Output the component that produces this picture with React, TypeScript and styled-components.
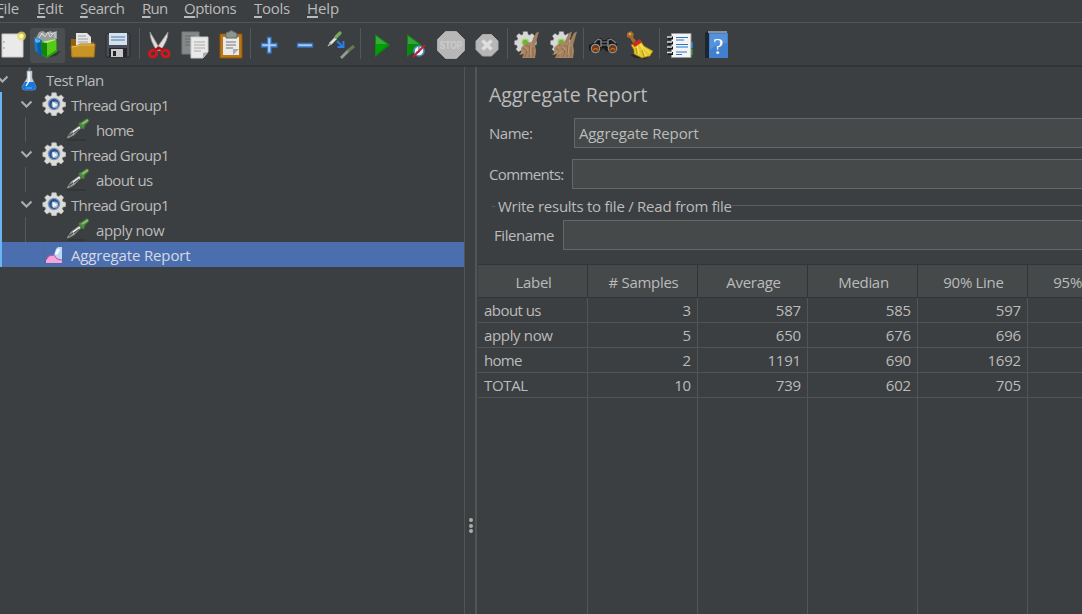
import React from "react";
import styled, { createGlobalStyle } from "styled-components";

const Global = createGlobalStyle`
  * { box-sizing: border-box; }
  html, body, #root { height: 100%; }
  body {
    margin: 0;
    overflow: hidden;
    background: #3c3f41;
    color: #bbbbbb;
    font: 15px/20px "Open Sans", "Noto Sans", sans-serif;
    white-space: nowrap;
  }
`;

const Window = styled.div`
  display: flex;
  flex-direction: column;
  width: 1082px;
  height: 614px;
  overflow: hidden;
`;

const MenuBar = styled.nav`
  display: flex;
  height: 23px;
  flex: none;
  border-bottom: 1px solid #515355;
  margin-left: -4px;
`;

const MenuItem = styled.span<{ $w: number; $track: number }>`
  display: block;
  width: ${(p) => p.$w}px;
  line-height: 16px;
  letter-spacing: ${(p) => p.$track}px;
  &::first-letter {
    text-decoration: underline;
    text-decoration-thickness: 1.5px;
    text-underline-offset: 1.5px;
  }
`;

const ToolBar = styled.div`
  display: flex;
  align-items: center;
  flex: none;
  height: 44px;
  padding-bottom: 2px;
  border-bottom: 2px solid #323537;
`;

const ToolGroup = styled.div<{ $w: number; $slot?: number; $end?: boolean }>`
  display: grid;
  grid-auto-flow: column;
  grid-auto-columns: ${(p) => p.$slot ?? 36}px;
  justify-content: ${(p) => (p.$end ? "end" : "center")};
  align-items: center;
  flex: none;
  width: ${(p) => p.$w}px;
  height: 31px;
  padding-right: ${(p) => (p.$end ? 4 : 1)}px;
  border-right: 1px solid #55585a;
  &:last-child { border-right-color: transparent; }
`;

const ToolButton = styled.span<{ $active?: boolean }>`
  display: flex;
  align-items: center;
  justify-content: center;
  height: 35px;
  border-radius: 3px;
  background: ${(p) => (p.$active ? "#4a4e50" : "transparent")};
`;

const Body = styled.div`
  display: flex;
  flex: 1;
  min-height: 0;
`;

const Tree = styled.div`
  width: 465px;
  flex: none;
  border-right: 1px solid #515355;
`;

const TreeRow = styled.div<{ $indent: number; $selected?: boolean; $bar?: boolean }>`
  display: flex;
  align-items: center;
  height: 25px;
  padding-left: ${(p) => p.$indent}px;
  box-shadow: ${(p) => (p.$bar ? "inset 2px 0 #6cb5f5" : "none")};
  background: ${(p) => (p.$selected ? "#4b6eaf" : "transparent")};
`;

const Chevron = styled.span<{ $w?: number; $shift?: number }>`
  display: flex;
  width: ${(p) => p.$w ?? 22}px;
  margin-left: ${(p) => p.$shift ?? 0}px;
  padding-bottom: 1px;
  flex: none;
`;

const Guide = styled.span`
  width: 41px;
  height: 25px;
  flex: none;
  border-left: 1.5px solid #56595b;
`;

const NodeIcon = styled.span<{ $w: number }>`
  display: flex;
  width: ${(p) => p.$w}px;
  padding-bottom: 1px;
  flex: none;
`;

const Text = styled.span<{ $track?: number; $light?: boolean }>`
  letter-spacing: ${(p) => p.$track ?? 0}px;
  color: ${(p) => (p.$light ? "#d5d9e2" : "inherit")};
`;

const Splitter = styled.div`
  display: flex;
  flex-direction: column;
  align-items: center;
  gap: 1.6px;
  width: 12px;
  flex: none;
  padding-top: 451px;
  padding-left: 1px;
  border-right: 2px solid #555452;
`;

const Dot = styled.i`
  width: 4px;
  height: 4px;
  border-radius: 50%;
  background: #adadad;
`;

const Report = styled.main`
  display: flex;
  flex-direction: column;
  flex: 1;
  min-width: 0;
  overflow: hidden;
`;

const Title = styled.h1`
  margin: 14px 0 9px 12px;
  font-size: 19.5px;
  line-height: 28px;
  font-weight: 400;
`;

const FormRow = styled.div<{ $label: number; $left?: number; $gap: number }>`
  display: grid;
  grid-template-columns: ${(p) => p.$label}px 1fr;
  align-items: center;
  height: 30px;
  flex: none;
  margin-left: ${(p) => p.$left ?? 12}px;
  margin-bottom: ${(p) => p.$gap}px;
`;

const Field = styled.div`
  height: 30px;
  padding: 4px 4px;
  border: 1px solid #646667;
  border-right: 0;
  background: #45494a;
`;

const GroupTitle = styled.div`
  display: flex;
  align-items: center;
  gap: 3px;
  height: 20px;
  margin-left: 15px;
  margin-top: -4px;
  margin-bottom: 4px;
  &::before { content: ""; width: 3px; height: 1px; background: #5a5d5f; }
  &::after { content: ""; flex: 1; height: 1px; background: #5a5d5f; margin-left: -3px; margin-top: -2px; }
`;

const Table = styled.div`
  display: grid;
  grid-template-columns: repeat(6, 110px);
  grid-template-rows: 34px repeat(4, 25px) 1fr;
  flex: 1;
  margin-left: 1px;
`;

const HeadCell = styled.div`
  display: flex;
  align-items: center;
  justify-content: center;
  padding: 2px 0 0 2px;
  border: solid #323537;
  border-width: 1px 1px 1px 0;
  background: #45494a;
`;

const Cell = styled.div<{ $num?: boolean }>`
  padding: 2px 6px 0;
  text-align: ${(p) => (p.$num ? "right" : "left")};
  border: solid #525456;
  border-width: 0 1px 1px 0;
`;

const Filler = styled.div`
  border-right: 1px solid #525456;
`;

const Svg = ({ s = 30, children }: { s?: number; children: React.ReactNode }) => (
  <svg width={s} height={s} viewBox="0 0 30 30" fill="none">{children}</svg>
);

const gearPath =
  "M12.5 2h5l.8 3.4 2 .9 3-1.9 3 3-1.9 3 .9 2 3.2.8v4.6l-3.2.8-.9 2 1.9 3-3 3-3-1.9-2 .9-.8 3.2h-5l-.8-3.2-2-.9-3 1.9-3-3 1.9-3-.9-2L2 17.8v-4.6l3.2-.8.9-2-1.9-3 3-3 3 1.9 2-.9z";

const NewIcon = () => (
  <Svg>
    <path d="M4 4h21v23H4z" fill="#eaeaea" stroke="#c8c8c8" />
    <path d="M5 12h2M5 18h2" stroke="#999" />
    <circle cx="23.5" cy="6" r="4.5" fill="#eadb55" opacity=".75" />
    <circle cx="23.5" cy="6" r="2" fill="#fff9bb" />
  </Svg>
);
const TemplatesIcon = () => (
  <Svg>
    <path d="m3 8 3-6 4-1 3 2 4-2 3 1 4-1v8l-16 4z" fill="#989e9f" />
    <path d="m6 8 3-5 3 4 3-5 2 5 5-5v6M8 4l3 1m6-2 3 1" stroke="#d4d7d7" />
    <path d="m1 7 8 3v15l-7-4z" fill="#1677c8" /><path d="m2 8 5 2v4l-5-2z" fill="#53b2ec" />
    <path d="m4 13 6-2v16l-5-3z" fill="#0a5fa8" />
    <path d="m21 22 7-1-5 5-7 1z" fill="#292c2c" opacity=".7" />
    <path d="m8 12 6-1 8-2 2 2v11l-10 6-5-3z" fill="#2aa10b" />
    <path d="m14 13 9-3v10l-9 6z" fill="#58c918" />
    <path d="m8 12 6 1v14l-5-3z" fill="#168208" /><path d="m8 12 14-3 1 1-9 3z" fill="#b4ef72" />
  </Svg>
);
const OpenIcon = () => (
  <Svg>
    <path d="M3 9h5l2 3h16v14H3z" fill="#94600d" />
    <path d="M8 3h11l4 4v11H8z" fill="#e5e5e5" /><path d="M10 6h8M10 9h10M10 12h10" stroke="#a0a0a0" />
    <path d="M3 16h6l3-2h15l-1 13H4z" fill="#c99424" stroke="#a97616" /><path d="m4 17 6-1 2-1h14" stroke="#e8bd5c" />
  </Svg>
);
const SaveIcon = () => (
  <Svg>
    <path d="M4 3.500h22l1 1.500v22H3V5z" fill="#4a4d55" stroke="#292b31" />
    <path d="M6 3h18v12H6z" fill="#d5e1ee" /><path d="M8 7h14M8 10h14" stroke="#7a9dc0" strokeWidth="1.300" />
    <path d="M6 18h18v9H6z" fill="#24262a" /><path d="M8 19h12v8H8z" fill="#c9c9c9" /><path d="M10 21h3v5h-3z" fill="#252525" />
  </Svg>
);
const CutIcon = () => (
  <Svg>
    <path d="m6 2 10 17-3 2Q6 11 6 2M24 2 12 19l4 2Q24 11 24 2" fill="#ddd" stroke="#929292" strokeWidth=".7" />
    <ellipse cx="9" cy="23.500" rx="3.700" ry="3.200" stroke="#d6161a" strokeWidth="2.800" transform="rotate(-25 9 23.500)" />
    <ellipse cx="21.500" cy="23.500" rx="3.700" ry="3.200" stroke="#d6161a" strokeWidth="2.800" transform="rotate(25 21.500 23.500)" />
    <path d="m11 20 4-2 4 2" stroke="#b70c10" strokeWidth="2.500" />
  </Svg>
);
const CopyIcon = () => (
  <Svg>
    <path d="M2 2h17v22H2z" fill="#858989" stroke="#777b7b" /><path d="M5 6h10M5 9h10M5 12h6M5 15h5" stroke="#676b6b" />
    <path d="M11 7h17v15l-5 6H11z" fill="#e9e9e9" stroke="#ccc" /><path d="M14 12h11M14 15h11M14 18h11M14 21h7" stroke="#aaa" />
    <path d="m28 22-5 6v-5z" fill="#aaa" />
  </Svg>
);
const PasteIcon = () => (
  <Svg>
    <path d="M4 4h22v24H4z" fill="#b97718" stroke="#8d550b" /><path d="M7 7h16v18H7z" fill="#e9e9e9" />
    <path d="M10 3q1-1 3-1 2-3 5 0 2 0 3 2v4H10z" fill="#8d9591" stroke="#626a67" />
    <path d="M10 12h10M10 15h10M10 18h7" stroke="#777" /><path d="m23 19-6 6v-6z" fill="#aaa" />
  </Svg>
);
const PlusIcon = () => (
  <Svg><path d="M13.500 7.500h3.500v6h6V17h-6v6h-3.500v-6h-6v-3.500h6z" fill="#a7caef" stroke="#3573c4" strokeWidth="1.300" /></Svg>
);
const MinusIcon = () => (
  <Svg><path d="M7.500 13.500h15V17h-15z" fill="#a7caef" stroke="#3573c4" strokeWidth="1.300" /></Svg>
);
const ToggleIcon = () => (
  <Svg>
    <path d="M4 14 10 8" stroke="#e0e0db" strokeWidth="2.800" /><path d="m10 7 4-4" stroke="#78a85a" strokeWidth="3.200" strokeLinecap="round" />
    <path d="m2 16 3-3" stroke="#b2b2ae" strokeWidth="1.500" />
    <path d="m11 11 5 5M17.500 11v6h-6" stroke="#2680ed" strokeWidth="1.900" />
    <path d="m15 28 8-8" stroke="#969995" strokeWidth="2.800" /><path d="m22 21 6-5" stroke="#607b50" strokeWidth="3.200" />
  </Svg>
);
const PlayIcon = () => (
  <Svg>
    <path d="M10 4 25 15 10 27z" fill="#078b0d" /><path d="M11 6 22 14H11z" fill="#3da63c" /><path d="M11 14h12L11 24z" fill="#02a007" />
  </Svg>
);
const PlayNoPauseIcon = () => (
  <Svg>
    <path d="M6 4 21 15 6 27z" fill="#078b0d" /><path d="m7 6 11 8H7z" fill="#3f9f40" />
    <circle cx="18" cy="21" r="5" fill="#eef5fb" stroke="#5187c3" strokeWidth="1.600" />
    <path d="M18 17v5h-3" stroke="#3b71af" strokeWidth="1.200" /><path d="m12 27 12-12" stroke="#c91d24" strokeWidth="1.800" />
  </Svg>
);
const StopText = styled.text`
  font: 700 11.5px "Liberation Sans", sans-serif;
  fill: #cccccc;
`;
const StopIcon = () => (
  <Svg>
    <path d="M9.500 1.500h11l8 8v11l-8 8h-11l-8-8v-11z" fill="#b7b7b7" stroke="#aaa" />
    <StopText x="3.500" y="19" textLength="23" lengthAdjust="spacingAndGlyphs">STOP</StopText>
  </Svg>
);
const ShutdownIcon = () => (
  <Svg>
    <path d="M10.500 4.500h9l6.500 6.500v8.500L19.500 26h-9L4 19.500V11z" fill="#b7b7b7" stroke="#aaa" />
    <path d="m10.500 10.500 9 9m0-9-9 9" stroke="#dedede" strokeWidth="3.400" />
  </Svg>
);
const Broom = ({ x = 0 }: { x?: number }) => (
  <g transform={`translate(${x} 0)`}>
    <path d="m19 13 5-10 3-1.500-4 14z" fill="#a08060" />
    <path d="M9 18q4-5 9-6l5 3 1 6-1 7H10l2-4-5 1q3-2 2-7" fill="#a88563" />
    <path d="m11 18 4 3-2 6m5-12-1 12m4-10v10M14 15l3 2" stroke="#856547" strokeWidth=".8" />
    <path d="m13 17 3 4m3-6-1 10m-9-1 3-3" stroke="#c0a07c" strokeWidth=".8" />
  </g>
);
const ClearGear = () => (
  <g transform="translate(1 0) scale(.82)">
    <path d={gearPath} fill="#d8d8d8" stroke="#bbb" strokeWidth=".5" />
    <circle cx="15" cy="15" r="4" fill="#69b832" stroke="#a4d572" strokeWidth="1.500" />
  </g>
);
const ClearIcon = () => <Svg><ClearGear /><Broom /></Svg>;
const ClearAllIcon = () => <Svg><ClearGear /><Broom x={-3} /><Broom x={2} /></Svg>;
const SearchIcon = () => (
  <Svg>
    <path d="m3 14 5-6h4l2 2h3l2-2h4l5 6v6l-5 3-6-2-3-3-3 3-6 2-5-3v-5z" fill="#17191a" />
    <path d="m5 13 4-4 3 1v7m15-4-5-4-3 1v7" stroke="#797b7c" strokeWidth="1.500" /><path d="M12 12h7M12 15h7" stroke="#858789" />
    <circle cx="6.500" cy="18.500" r="4.200" fill="#713812" stroke="#8d8e8f" strokeWidth="1.200" />
    <circle cx="23.500" cy="18.500" r="4.200" fill="#713812" stroke="#8d8e8f" strokeWidth="1.200" />
    <path d="M4 20q3-3 5 0M21 20q3-3 5 0" stroke="#c2671e" strokeWidth="1.500" />
  </Svg>
);
const ResetIcon = () => (
  <Svg>
    <path d="m6 25 8-2 14 1-6 5-11-1z" fill="#272929" />
    <path d="m3 3 4-2 3 3-1 3 3 4-3 2-3-5-3-1z" fill="#a56b29" /><circle cx="6" cy="4" r="1.300" fill="#d9a55c" />
    <path d="m7 15 9-5 4 6 9 5-3 5-8 2-8-4q1-4-3-9" fill="#e5c82b" stroke="#987410" strokeWidth=".7" />
    <path d="m13 15 2 9m1-10 6 12m-5-11 9 8" stroke="#f8e96e" /><path d="m12 18 1 6m5-4 2 7" stroke="#b78d14" />
    <path d="m8 14 8-5 2 3-7 5z" fill="#cf2926" />
  </Svg>
);
const LogIcon = () => (
  <Svg>
    <path d="M24 12h4v6h-4z" fill="#237bd6" /><path d="M24 19h4v6h-4z" fill="#1b8f20" />
    <path d="M6.500 3.500H26v24H6.500z" fill="#f4f4f4" stroke="#999" />
    <path d="M3 8h5M3 13h5M3 18h5M3 23.500h5" stroke="#15191b" strokeWidth="3" /><path d="M2 7h5M2 12h5M2 17h5M2 22.500h5" stroke="#ddd" strokeWidth="1.500" />
    <path d="M11 7.500h12M11 10h8M11 14.500h12M11 17h12M11 22h11M11 24.500h6" stroke="#2873c8" strokeWidth="1.100" />
  </Svg>
);
const HelpMark = styled.text`
  font: 23px "Liberation Serif", serif;
  fill: #ffffff;
`;
const HelpIcon = () => (
  <Svg>
    <path d="m4 3 3-2h19v27H4z" fill="#1d252e" /><path d="M8 3h19v25H8z" fill="#4080ce" />
    <path d="M7 2h19" stroke="#d7dbe0" strokeWidth="1.200" /><path d="M9 4h17v9q-9 0-17 7z" fill="#659fe3" opacity=".6" />
    <HelpMark x="12" y="23.500">?</HelpMark>
  </Svg>
);

const FlaskIcon = () => (
  <svg width="16" height="24" viewBox="0 0 16 24" fill="none">
    <path d="m8 0 2 1-1 3H7z" fill="#70777c" />
    <path d="M6 4h5v7l4 9q0 3-3 3H4q-3 0-3-3l5-9z" fill="#c5d2dc" stroke="#9eacb7" strokeWidth=".6" />
    <path d="m4 15 9 0 2 5q0 3-3 3H4q-3 0-3-3z" fill="#1877dd" /><path d="M8 5v9l-3 5" stroke="#fff" strokeWidth="1.400" /><path d="M5 21h6" stroke="#49b6ff" />
  </svg>
);
const GearIcon = () => (
  <svg width="24" height="24" viewBox="1 1 28 28" fill="none">
    <path d={gearPath} fill="#dcdcd9" stroke="#bcbcb8" strokeWidth=".8" />
    <circle cx="15" cy="15" r="6.500" fill="#28508d" stroke="#8096b9" strokeWidth="1.600" />
    <circle cx="16" cy="16" r="3.800" fill="#a4b7ce" /><path d="m13 12 6 4-5 3z" fill="#f3f7fb" />
  </svg>
);
const DropperIcon = () => (
  <svg width="24" height="24" viewBox="0 0 24 24" fill="none">
    <path d="M1 23h19" stroke="#2d3031" />
    <path d="m1 21 4-6 8-6 2 2-7 7-6 3z" fill="#a7aaa6" stroke="#858884" strokeWidth=".7" />
    <path d="m3 19 4-3m1 0 5-4" stroke="#4f5351" strokeWidth="1.200" /><path d="m7 15 7-5" stroke="#f3f3f0" strokeWidth="1.300" />
    <path d="m13 6 3-1 4-3q3-1 2.500 3l-3.500 3-1 4-3-1-2-3z" fill="#4d8a44" stroke="#3e7035" strokeWidth=".7" />
    <path d="m16 7 6-4" stroke="#92bd79" strokeWidth="1.900" />
  </svg>
);
const ChartIcon = () => (
  <svg width="20" height="20" viewBox="0 0 20 20" fill="none">
    <path d="M1.500 0v19H20" stroke="#59658b" strokeWidth=".7" />
    <path d="m11 11 2-6 2-2h4v14h-8z" fill="#b8d9f5" /><path d="m13 10 3-5" stroke="#fff" strokeWidth="2.500" />
    <path d="m3 16 3-4 5-1 3 4 5 1v3H3z" fill="#f5a5dc" /><path d="m3 16 3-4 5-1 3 4 5 1" stroke="#c4509d" />
  </svg>
);
const DownIcon = () => (
  <svg width="13" height="13" viewBox="0 0 13 13" fill="none"><path d="m1.500 3.500 5 5 5-5" stroke="#adadad" strokeWidth="2.100" /></svg>
);

const menus: [string, number, number][] = [
  ["File", 41, -0.2], ["Edit", 43, -0.1], ["Search", 62, -0.5], ["Run", 42, -0.7],
  ["Options", 70, -0.45], ["Tools", 53, -0.3], ["Help", 60, -0.1],
];

const toolGroups: { w: number; slot?: number; end?: boolean; icons: React.FC[] }[] = [
  { w: 140, slot: 35, end: true, icons: [NewIcon, TemplatesIcon, OpenIcon, SaveIcon] },
  { w: 111, icons: [CutIcon, CopyIcon, PasteIcon] },
  { w: 110, icons: [PlusIcon, MinusIcon, ToggleIcon] },
  { w: 147, slot: 35.5, icons: [PlayIcon, PlayNoPauseIcon, StopIcon, ShutdownIcon] },
  { w: 76, icons: [ClearIcon, ClearAllIcon] },
  { w: 76, slot: 35, icons: [SearchIcon, ResetIcon] },
  { w: 77, icons: [LogIcon, HelpIcon] },
];

const threads: [string, number][] = [["home", -0.75], ["about us", -0.6], ["apply now", -0.4]];

const columns = ["Label", "# Samples", "Average", "Median", "90% Line", "95% Line"];
const rows: { label: string; track: number; values: string[] }[] = [
  { label: "about us", track: -0.55, values: ["3", "587", "585", "597", ""] },
  { label: "apply now", track: -0.35, values: ["5", "650", "676", "696", ""] },
  { label: "home", track: -0.7, values: ["2", "1191", "690", "1692", ""] },
  { label: "TOTAL", track: -0.35, values: ["10", "739", "602", "705", ""] },
];

export default function App() {
  return (
    <Window>
      <Global />
      <MenuBar>
        {menus.map(([name, w, track]) => <MenuItem key={name} $w={w} $track={track}>{name}</MenuItem>)}
      </MenuBar>
      <ToolBar>
        {toolGroups.map((g, i) => (
          <ToolGroup key={i} $w={g.w} $slot={g.slot} $end={g.end}>
            {g.icons.map((Icon, j) => <ToolButton key={j} $active={Icon === TemplatesIcon}><Icon /></ToolButton>)}
          </ToolGroup>
        ))}
      </ToolBar>
      <Body>
        <Tree>
          <TreeRow $indent={0}>
            <Chevron $w={25} $shift={-4}><DownIcon /></Chevron>
            <NodeIcon $w={25}><FlaskIcon /></NodeIcon>
            <Text $track={-0.65}>Test Plan</Text>
          </TreeRow>
          {threads.map(([name, track]) => (
            <React.Fragment key={name}>
              <TreeRow $indent={20} $bar>
                <Chevron><DownIcon /></Chevron>
                <NodeIcon $w={29}><GearIcon /></NodeIcon>
                <Text $track={-0.65}>Thread Group1</Text>
              </TreeRow>
              <TreeRow $indent={25} $bar>
                <Guide />
                <NodeIcon $w={30}><DropperIcon /></NodeIcon>
                <Text $track={track}>{name}</Text>
              </TreeRow>
            </React.Fragment>
          ))}
          <TreeRow $indent={43} $bar $selected>
            <NodeIcon $w={28}><ChartIcon /></NodeIcon>
            <Text $track={-0.15} $light>Aggregate Report</Text>
          </TreeRow>
        </Tree>
        <Splitter><Dot /><Dot /><Dot /></Splitter>
        <Report>
          <Title>Aggregate Report</Title>
          <FormRow $label={85} $gap={11}>
            <Text $track={-0.5}>Name:</Text>
            <Field><Text $track={-0.13}>Aggregate Report</Text></Field>
          </FormRow>
          <FormRow $label={83} $gap={11}>
            <Text $track={-0.65}>Comments:</Text>
            <Field />
          </FormRow>
          <GroupTitle><Text $track={-0.25}>Write results to file / Read from file</Text></GroupTitle>
          <FormRow $label={69} $left={17} $gap={14}>
            <Text $track={-0.45}>Filename</Text>
            <Field />
          </FormRow>
          <Table>
            {columns.map((c) => <HeadCell key={c}><Text $track={-0.3}>{c}</Text></HeadCell>)}
            {rows.map((r) => (
              <React.Fragment key={r.label}>
                <Cell><Text $track={r.track}>{r.label}</Text></Cell>
                {r.values.map((v, i) => <Cell key={i} $num><Text $track={-0.2}>{v}</Text></Cell>)}
              </React.Fragment>
            ))}
            {columns.map((c) => <Filler key={c} />)}
          </Table>
        </Report>
      </Body>
    </Window>
  );
}
